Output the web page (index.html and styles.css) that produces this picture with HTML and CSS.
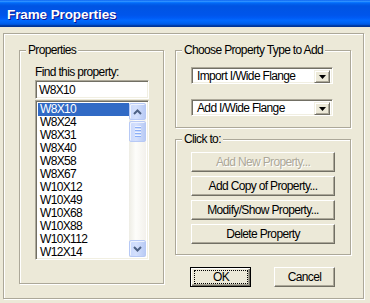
FILE: index.html
```html
<!DOCTYPE html>
<html>
    <head>
        <title>Frame Properties</title>
        <link rel="stylesheet" href="styles.css">
    </head>
    <body>
        <div class="titlebar"><span class="title">Frame Properties</span></div>

        <div class="client">
            <div class="frame">

                <div class="group props">
                    <span class="group-label">Properties</span>
                    <div class="find-label">Find this property:</div>
                    <div class="textbox">W8X10</div>
                    <div class="listbox">
                        <ul class="items">
                            <li class="sel">W8X10</li>
                            <li>W8X24</li>
                            <li>W8X31</li>
                            <li>W8X40</li>
                            <li>W8X58</li>
                            <li>W8X67</li>
                            <li>W10X12</li>
                            <li>W10X49</li>
                            <li>W10X68</li>
                            <li>W10X88</li>
                            <li>W10X112</li>
                            <li>W12X14</li>
                        </ul>
                        <div class="scrollbar">
                            <div class="sb-btn">
                                <svg width="9" height="6" viewBox="0 0 9 6"><path d="M1 5 L4.5 1.5 L8 5" fill="none" stroke="#4d6185" stroke-width="2"/></svg>
                            </div>
                            <div class="sb-thumb"><span></span><span></span><span></span><span></span></div>
                            <div class="sb-track"></div>
                            <div class="sb-btn">
                                <svg width="9" height="6" viewBox="0 0 9 6"><path d="M1 1 L4.5 4.5 L8 1" fill="none" stroke="#4d6185" stroke-width="2"/></svg>
                            </div>
                        </div>
                    </div>
                </div>

                <div class="right">
                    <div class="group choose">
                        <span class="group-label">Choose Property Type to Add</span>
                        <div class="combo">
                            <span class="combo-text">Import I/Wide Flange</span>
                            <span class="drop"><svg width="7" height="4" viewBox="0 0 7 4"><path d="M0 0 H7 L3.5 4 Z" fill="#000"/></svg></span>
                        </div>
                        <div class="combo second">
                            <span class="combo-text">Add I/Wide Flange</span>
                            <span class="drop"><svg width="7" height="4" viewBox="0 0 7 4"><path d="M0 0 H7 L3.5 4 Z" fill="#000"/></svg></span>
                        </div>
                    </div>

                    <div class="group click">
                        <span class="group-label">Click to:</span>
                        <button class="btn wide" disabled>Add New Property...</button>
                        <button class="btn wide">Add Copy of Property...</button>
                        <button class="btn wide">Modify/Show Property...</button>
                        <button class="btn wide">Delete Property</button>
                    </div>

                    <div class="dlg-buttons">
                        <button class="btn default"><span class="focus">OK</span></button>
                        <button class="btn">Cancel</button>
                    </div>
                </div>

            </div>
        </div>
    </body>
</html>
```

FILE: styles.css
```css
body, html {
    margin: 0;
    padding: 0;
}

body {
    width: 370px;
    height: 303px;
    overflow: hidden;
    background: #ece9d8;
    color: #000;
    font-family: "Liberation Sans", Arial, sans-serif;
    font-size: 12px;
    letter-spacing: -0.65px;
}

/* title bar */
.titlebar {
    height: 27px;
    display: flex;
    align-items: center;
    padding-left: 7px;
    background: linear-gradient(to bottom, #0058ee 0%, #3593ff 4%, #288eff 6%, #127dff 8%, #036ffc 10%, #0262ee 14%, #0057e5 20%, #0054e3 24%, #0055eb 56%, #005bf5 66%, #026afe 76%, #0062ef 86%, #0052d6 92%, #0040ab 94%, #003092 100%);
}
.title {
    color: #fff;
    font-weight: bold;
    font-size: 13.5px;
    letter-spacing: -0.1px;
    text-shadow: 1px 1px #0f1089;
    margin-top: 2px;
}

/* etched frames */
.client { padding: 6px 0 0 3px; }

.frame, .group {
    box-sizing: border-box;
    border: 1px solid #aca899;
    box-shadow: inset 1px 1px #fff, 1px 1px #fff;
}
.frame {
    width: 361px;
    height: 266px;
    padding: 16px 0 0 15px;
    display: flex;
    gap: 11px;
}
.group { position: relative; }
.group-label {
    position: absolute;
    top: -8px;
    left: 6px;
    padding: 0 2px;
    line-height: 15px;
    background: #ece9d8;
    white-space: nowrap;
}

/* properties */
.props {
    width: 145px;
    height: 234px;
    padding: 14px 0 0 15px;
}
.find-label {
    height: 15px;
    line-height: 14px;
}
.textbox, .listbox, .combo {
    box-sizing: border-box;
    background: #fff;
    border: 1px solid;
    border-color: #aca899 #fff #fff #aca899;
    box-shadow: inset 1px 1px #716f64, inset -1px -1px #f1efe2;
}
.textbox {
    width: 114px;
    height: 19px;
    padding: 2px 0 0 3px;
    line-height: 14px;
}
.listbox {
    width: 114px;
    height: 160px;
    margin-top: 1px;
    padding: 2px;
    display: flex;
}
.items {
    flex: 1;
    margin: 0;
    padding: 0;
    list-style: none;
}
.items li {
    height: 13px;
    line-height: 13px;
    padding-left: 2px;
}
.items li.sel {
    background: #316ac5;
    color: #fff;
}

/* xp scrollbar */
.scrollbar {
    width: 17px;
    display: flex;
    flex-direction: column;
    background: linear-gradient(to right, #eeede5, #fdfdfa 40%, #f3f1ec);
}
.sb-btn, .sb-thumb {
    box-sizing: border-box;
    border: 1px solid #b7c9f5;
    border-radius: 2px;
    background: linear-gradient(to right, #c9d8fc, #d4e0fd 40%, #b9cbf5);
    box-shadow: inset 1px 1px #eef3fe;
}
.sb-btn {
    height: 17px;
    display: flex;
    align-items: center;
    justify-content: center;
}
.sb-thumb {
    height: 21px;
    margin-top: 1px;
    display: flex;
    flex-direction: column;
    align-items: center;
    justify-content: center;
    gap: 1px;
}
.sb-thumb span {
    width: 6px;
    height: 1px;
    background: #eef3fe;
    border-bottom: 1px solid #8cb0f8;
}
.sb-track { flex: 1; }

/* right column */
.right {
    width: 176px;
    display: flex;
    flex-direction: column;
}
.choose {
    height: 78px;
    padding: 16px 0 0 15px;
}
.combo {
    width: 142px;
    height: 17px;
    padding: 2px;
    display: flex;
}
.combo.second { margin-top: 15px; }
.combo-text {
    flex: 1;
    padding-left: 3px;
    line-height: 13px;
    white-space: nowrap;
}
.drop {
    box-sizing: border-box;
    width: 16px;
    height: 13px;
    display: flex;
    align-items: center;
    justify-content: center;
    background: #ece9d8;
    border: 1px solid;
    border-color: #f1efe2 #716f64 #716f64 #f1efe2;
    box-shadow: inset 1px 1px #fff, inset -1px -1px #aca899;
}

.click {
    height: 116px;
    margin-top: 11px;
    padding: 12px 0 0 15px;
}

/* classic buttons */
.btn {
    box-sizing: border-box;
    height: 20px;
    margin: 0;
    padding: 0;
    font: inherit;
    letter-spacing: inherit;
    color: #000;
    background: #ece9d8;
    border: 1px solid;
    border-color: #fff #716f64 #716f64 #fff;
    box-shadow: inset -1px -1px #aca899;
    display: flex;
    align-items: center;
    justify-content: center;
    white-space: nowrap;
}
.btn.wide {
    width: 144px;
    margin-bottom: 4px;
}
.btn:disabled {
    color: #aca899;
    text-shadow: 1px 1px #fff;
}

.dlg-buttons {
    display: flex;
    gap: 23px;
    margin-top: 12px;
    padding-left: 15px;
}
.dlg-buttons .btn { width: 61px; }
.btn.default {
    border-color: #000;
    box-shadow: inset 1px 1px #fff, inset -1px -1px #716f64, inset -2px -2px #aca899;
}
.focus {
    box-sizing: border-box;
    width: 54px;
    height: 14px;
    margin-left: 1px;
    border: 1px dotted #000;
    line-height: 12px;
    text-align: center;
}
```
